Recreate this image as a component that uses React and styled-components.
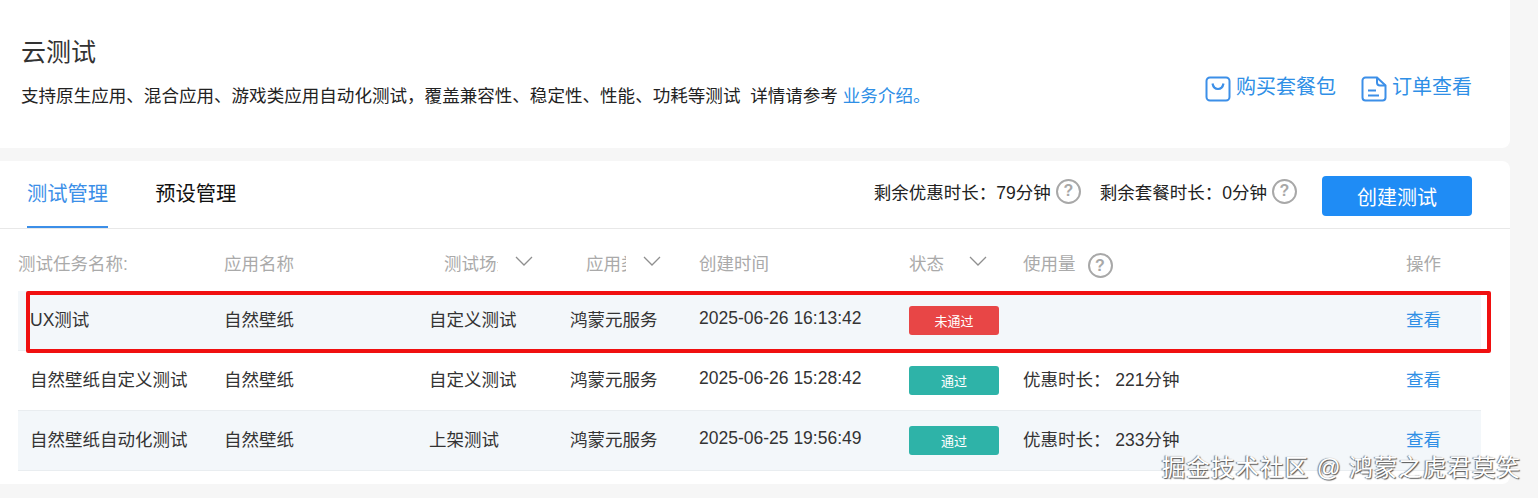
import styled, { createGlobalStyle } from "styled-components"

const GlobalStyle = createGlobalStyle`
  html, body { margin: 0; padding: 0; background: #f6f6f6; }
  body { font-family: "Liberation Sans", "Noto Sans CJK SC", sans-serif; color: #333; }
`

const columns = "206px 205px 141px 129px 210px 114px 383px 75px"

const rows = [
  { name: "UX测试", app: "自然壁纸", scene: "自定义测试", kind: "鸿蒙元服务", time: "2025-06-26 16:13:42", status: "未通过", failed: true, usage: "", shaded: true },
  { name: "自然壁纸自定义测试", app: "自然壁纸", scene: "自定义测试", kind: "鸿蒙元服务", time: "2025-06-26 15:28:42", status: "通过", usage: "优惠时长： 221分钟" },
  { name: "自然壁纸自动化测试", app: "自然壁纸", scene: "上架测试", kind: "鸿蒙元服务", time: "2025-06-25 19:56:49", status: "通过", usage: "优惠时长： 233分钟", shaded: true },
]

function Chevron() {
  return (
    <ChevronSvg viewBox="0 0 18 10" fill="none" stroke="#8f8f8f" strokeWidth="1.3">
      <path d="M1 1l8 8 8-8" />
    </ChevronSvg>
  )
}

function App() {
  return (
    <Page>
      <GlobalStyle />
      <Intro>
        <div>
          <Title>云测试</Title>
          <Description>
            支持原生应用、混合应用、游戏类应用自动化测试，覆盖兼容性、稳定性、性能、功耗等测试&nbsp;&nbsp;详情请参考 <Link>业务介绍。</Link>
          </Description>
        </div>
        <Shortcuts>
          <Shortcut>
            <ShortcutIcon viewBox="0 0 26 26" fill="none" stroke="#3c8fe8" strokeWidth="2">
              <rect x="1.5" y="1.5" width="23" height="23" rx="3.5" />
              <path d="M7.5 7.5c.8 4 3 5.500 5.500 5.500s4.700-1.500 5.500-5.500" strokeWidth="2.200" />
            </ShortcutIcon>
            购买套餐包
          </Shortcut>
          <Shortcut>
            <ShortcutIcon viewBox="0 0 26 26" fill="none" stroke="#3c8fe8" strokeWidth="2">
              <path d="M16 1.500H4.500a3 3 0 0 0-3 3v17a3 3 0 0 0 3 3h17a3 3 0 0 0 3-3V9.500z" />
              <path d="M16 1.500v5a3 3 0 0 0 3 3h5.500" />
              <path d="M7 14.500h8M7 19.500h11" />
            </ShortcutIcon>
            订单查看
          </Shortcut>
        </Shortcuts>
      </Intro>

      <Panel>
        <TopBar>
          <Tabs>
            <Tab $active>测试管理</Tab>
            <Tab>预设管理</Tab>
          </Tabs>
          <Stats>
            <Stat>剩余优惠时长：79分钟<Help>?</Help></Stat>
            <Stat>剩余套餐时长：0分钟<Help>?</Help></Stat>
            <CreateButton>创建测试</CreateButton>
          </Stats>
        </TopBar>

        <Table>
          <HeadRow>
            <HeadCell>测试任务名称:</HeadCell>
            <HeadCell>应用名称</HeadCell>
            <HeadCell $inset={15}><Clipped $width={54}>测试场景</Clipped><Chevron /></HeadCell>
            <HeadCell $inset={16}><Clipped $width={40}>应用类型</Clipped><Chevron /></HeadCell>
            <HeadCell>创建时间</HeadCell>
            <HeadCell><Clipped $width={43}>状态</Clipped><Chevron /></HeadCell>
            <HeadCell>使用量<Help $small>?</Help></HeadCell>
            <HeadCell>操作</HeadCell>
          </HeadRow>
          {rows.map((row) => (
            <Row key={row.time} $shaded={row.shaded}>
              <NameCell>{row.name}</NameCell>
              <Cell>{row.app}</Cell>
              <Cell>{row.scene}</Cell>
              <Cell>{row.kind}</Cell>
              <Cell>{row.time}</Cell>
              <div><Badge $failed={row.failed}>{row.status}</Badge></div>
              <Cell>{row.usage}</Cell>
              <Cell><Link>查看</Link></Cell>
            </Row>
          ))}
          <Highlight />
        </Table>
      </Panel>

      <Watermark>掘金技术社区 @ 鸿蒙之虎君莫笑</Watermark>
    </Page>
  )
}

const Page = styled.div`
  position: relative;
  width: 1538px;
  height: 498px;
  overflow: hidden;
  background: #f6f6f6;
`
const Intro = styled.section`
  width: 1510px;
  height: 148px;
  box-sizing: border-box;
  padding: 37px 38px 0 21px;
  display: flex;
  justify-content: space-between;
  background: #fff;
  border-radius: 0 0 8px 0;
`
const Title = styled.h1`
  margin: 0;
  font-size: 25px;
  line-height: 30px;
  font-weight: 400;
  color: #333;
`
const Description = styled.p`
  margin: 15px 0 0;
  font-size: 17.560px;
  line-height: 28px;
  color: #222;
`
const Link = styled.span`
  color: #2f8fe6;
`
const Shortcuts = styled.div`
  display: flex;
  gap: 25px;
  margin-top: 37px;
`
const Shortcut = styled.div`
  display: flex;
  align-items: flex-start;
  gap: 5px;
  height: 30px;
  font-size: 20px;
  line-height: 26px;
  color: #2f8fe6;
`
const ShortcutIcon = styled.svg`
  width: 26px;
  height: 26px;
  margin-top: 2px;
`
const Panel = styled.section`
  width: 1510px;
  height: 323px;
  margin-top: 13px;
  background: #fff;
  border-radius: 0 8px 8px 0;
`
const TopBar = styled.div`
  height: 68px;
  box-sizing: border-box;
  padding: 0 38px 0 27px;
  display: flex;
  justify-content: space-between;
  border-bottom: 1px solid #e8e8e8;
`
const Tabs = styled.div`
  display: flex;
  gap: 47px;
`
const Tab = styled.div`
  height: 67px;
  box-sizing: border-box;
  padding-top: 20px;
  font-size: 20.300px;
  line-height: 26px;
  color: ${(p) => (p.$active ? "#3c8fe8" : "#111")};
  border-bottom: 2px solid ${(p) => (p.$active ? "#3c8fe8" : "transparent")};
`
const Stats = styled.div`
  display: flex;
  align-items: flex-start;
  padding-top: 15px;
`
const Stat = styled.div`
  display: flex;
  align-items: center;
  height: 30px;
  margin-right: 19px;
  font-size: 17.500px;
  color: #222;
`
const Help = styled.span`
  width: 21px;
  height: 21px;
  margin-left: ${(p) => (p.$small ? 12 : 5)}px;
  margin-top: ${(p) => (p.$small ? 6 : 0)}px;
  display: inline-flex;
  align-items: center;
  justify-content: center;
  border: 2px solid #a8a8a8;
  border-radius: 50%;
  font-size: 16px;
  font-weight: 700;
  color: #a8a8a8;
`
const CreateButton = styled.button`
  width: 150px;
  height: 40px;
  margin-left: 6px;
  border: none;
  border-radius: 4px;
  background: #1f8cf5;
  color: #fff;
  font-family: inherit;
  font-size: 20px;
`
const Table = styled.div`
  position: relative;
  width: 1463px;
  margin-left: 18px;
`
const HeadRow = styled.div`
  display: grid;
  grid-template-columns: ${columns};
  height: 62px;
  align-items: center;
`
const HeadCell = styled.div`
  display: flex;
  align-items: center;
  padding-left: ${(p) => p.$inset || 0}px;
  padding-top: 5px;
  font-size: 17.500px;
  color: #aaa;
  white-space: nowrap;
`
const Clipped = styled.span`
  display: inline-block;
  width: ${(p) => p.$width}px;
  overflow: hidden;
`
const ChevronSvg = styled.svg`
  width: 18px;
  height: 10px;
  margin-left: 17px;
  margin-top: -4px;
`
const Row = styled.div`
  display: grid;
  grid-template-columns: ${columns};
  height: 60px;
  box-sizing: border-box;
  align-items: center;
  font-size: 17.500px;
  color: #333;
  background: ${(p) => (p.$shaded ? "#f3f7fa" : "#fff")};
  border-bottom: 1px solid #e9edf0;
`
const Cell = styled.div`
  padding-bottom: 4px;
  white-space: pre;
`
const NameCell = styled(Cell)`
  padding-left: 12px;
`
const Badge = styled.div`
  width: 90px;
  height: 29px;
  display: flex;
  align-items: center;
  justify-content: center;
  border-radius: 3px;
  font-size: 13px;
  color: #fff;
  background: ${(p) => (p.$failed ? "#e84646" : "#2eb3a8")};
`
const Highlight = styled.div`
  position: absolute;
  left: 8px;
  top: 62px;
  width: 1465px;
  height: 62px;
  box-sizing: border-box;
  border: 4px solid #f01010;
  border-radius: 2px;
`
const Watermark = styled.div`
  position: absolute;
  right: 17px;
  top: 453px;
  font-size: 23.500px;
  line-height: 30px;
  letter-spacing: 1.050px;
  white-space: pre;
  color: #fff;
  text-shadow: 1px 1px 1px #555, -1px 0 1px #777;
`

export default App
